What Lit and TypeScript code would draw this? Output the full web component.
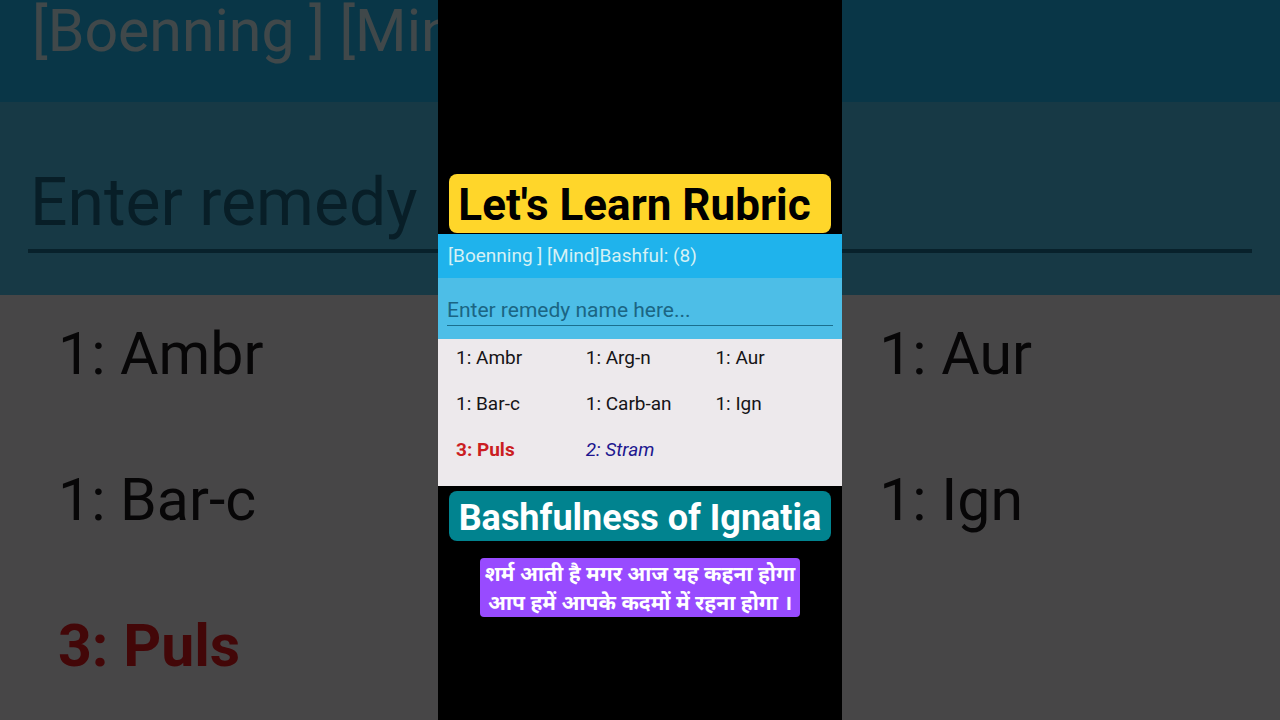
import { LitElement, html, css } from "lit";
import { customElement, property } from "lit/decorators.js";
import { classMap } from "lit/directives/class-map.js";

interface Remedy {
  name: string;
  grade: 1 | 2 | 3;
}

const REMEDIES: Remedy[] = [
  { name: "Ambr", grade: 1 },
  { name: "Arg-n", grade: 1 },
  { name: "Aur", grade: 1 },
  { name: "Bar-c", grade: 1 },
  { name: "Carb-an", grade: 1 },
  { name: "Ign", grade: 1 },
  { name: "Puls", grade: 3 },
  { name: "Stram", grade: 2 },
];

/** Remedy list of one rubric. The "large" size is used for the backdrop. */
@customElement("rubric-panel")
export class RubricPanel extends LitElement {
  @property({ reflect: true }) size: "regular" | "large" = "regular";
  @property() hint = "Enter remedy name here...";

  static styles = css`
    :host {
      --text: 19px;
      --title-text: 19px;
      --input-text: 21px;
      --title-height: 44px;
      --search-height: 61px;
      --search-pad: 13px 9px;
      --field-pad: 4px 0 0;
      --title-pad: 10px;
      --rule: 1px;
      --row: 46px;
      --list-pad: 0 0 9px 18px;
      --line: 38px;
      display: block;
      font-family: Roboto, "Open Sans", sans-serif;
      background: #ede9ec;
    }
    :host([size="large"]) {
      --text: 59px;
      --title-text: 59px;
      --input-text: 66px;
      --title-height: 142px;
      --search-height: 193px;
      --search-pad: 42px 28px;
      --field-pad: 12px 0 0 2px;
      --title-pad: 32px;
      --rule: 4px;
      --row: 146px;
      --list-pad: 0 0 28px 58px;
      --line: 118px;
    }
    .title {
      box-sizing: border-box;
      height: var(--title-height);
      margin: 0;
      padding: 0 var(--title-pad);
      font-size: var(--title-text);
      font-weight: 400;
      line-height: var(--title-height);
      white-space: nowrap;
      color: #d5f1f5;
      background: #1fb3ec;
    }
    .search {
      box-sizing: border-box;
      display: flex;
      height: var(--search-height);
      padding: var(--search-pad);
      background: #4dbee7;
    }
    .field {
      flex: 1;
      min-width: 0;
      box-sizing: border-box;
      padding: var(--field-pad);
      border: 0;
      border-bottom: var(--rule) solid #1b6f8e;
      border-radius: 0;
      outline: 0;
      background: transparent;
      font: 400 var(--input-text) Roboto, "Open Sans", sans-serif;
      color: #10384a;
    }
    .field::placeholder {
      color: #1b6583;
      opacity: 1;
    }
    .list {
      display: grid;
      grid-template-columns: repeat(3, 33.6%);
      grid-auto-rows: var(--row);
      margin: 0;
      padding: var(--list-pad);
      list-style: none;
      font-size: var(--text);
      line-height: var(--line);
      white-space: nowrap;
      color: #161417;
    }
    /* The stage covers the middle column of the backdrop. */
    :host([size="large"]) .list li:nth-child(3n + 2) {
      visibility: hidden;
    }
    .strong {
      font-weight: 700;
      color: #cb1d22;
    }
    .medium {
      font-style: italic;
      color: #20168f;
    }
    :host([size="large"]) .strong {
      color: #e0161c;
    }
  `;

  render() {
    return html`
      <h2 class="title">[Boenning ] [Mind]Bashful: (8)</h2>
      <div class="search">
        <input
          class="field"
          type="text"
          aria-label="Remedy name"
          placeholder=${this.hint}
        />
      </div>
      <ul class="list">
        ${REMEDIES.map(
          (r) => html`<li
            class=${classMap({ strong: r.grade === 3, medium: r.grade === 2 })}
          >${r.grade}: ${r.name}</li>`
        )}
      </ul>
    `;
  }
}

@customElement("app-root")
export class AppRoot extends LitElement {
  static styles = css`
    :host {
      display: grid;
      grid-template: 100vh / 1fr;
      overflow: hidden;
      background: #000;
      font-family: Roboto, "Open Sans", sans-serif;
    }
    .backdrop,
    .stage {
      grid-area: 1 / 1;
    }
    .backdrop {
      display: flex;
      flex-direction: column;
      justify-content: center;
      overflow: hidden;
      filter: brightness(0.3);
      background: #ede9ec;
    }
    .backdrop rubric-panel {
      flex: none;
    }
    .stage {
      position: relative;
      justify-self: center;
      box-sizing: border-box;
      width: 404px;
      max-width: 100%;
      padding-top: 174px;
      background: #000;
    }
    .heading,
    .caption {
      margin: 0 11px;
      border-radius: 8px;
      text-align: center;
      white-space: nowrap;
      font-weight: 700;
    }
    .heading {
      margin-bottom: 1px;
      padding: 4px 20px 0 9px;
      font-size: 44px;
      line-height: 55px;
      color: #000;
      background: #ffd62a;
    }
    .caption {
      margin-top: 5px;
      padding: 4px 0 0;
      font-size: 36px;
      line-height: 46px;
      color: #fff;
      background: #01838f;
    }
    .verse {
      width: fit-content;
      margin: 17px auto 0;
      padding: 1px 5px 0;
      border-radius: 4px;
      font-family: "Noto Sans", "Noto Sans Devanagari", sans-serif;
      font-size: 21px;
      font-weight: 700;
      line-height: 29px;
      text-align: center;
      white-space: nowrap;
      color: #fff;
      background: #984bff;
    }
  `;

  render() {
    return html`
      <div class="backdrop" aria-hidden="true" inert>
        <rubric-panel size="large" hint="Enter remedy"></rubric-panel>
      </div>
      <main class="stage">
        <h1 class="heading">Let's Learn Rubric</h1>
        <rubric-panel></rubric-panel>
        <p class="caption">Bashfulness of Ignatia</p>
        <p class="verse" lang="hi">
          शर्म आती है मगर आज यह कहना होगा<br />आप हमें आपके कदमों में रहना होगा ।
        </p>
      </main>
    `;
  }
}
